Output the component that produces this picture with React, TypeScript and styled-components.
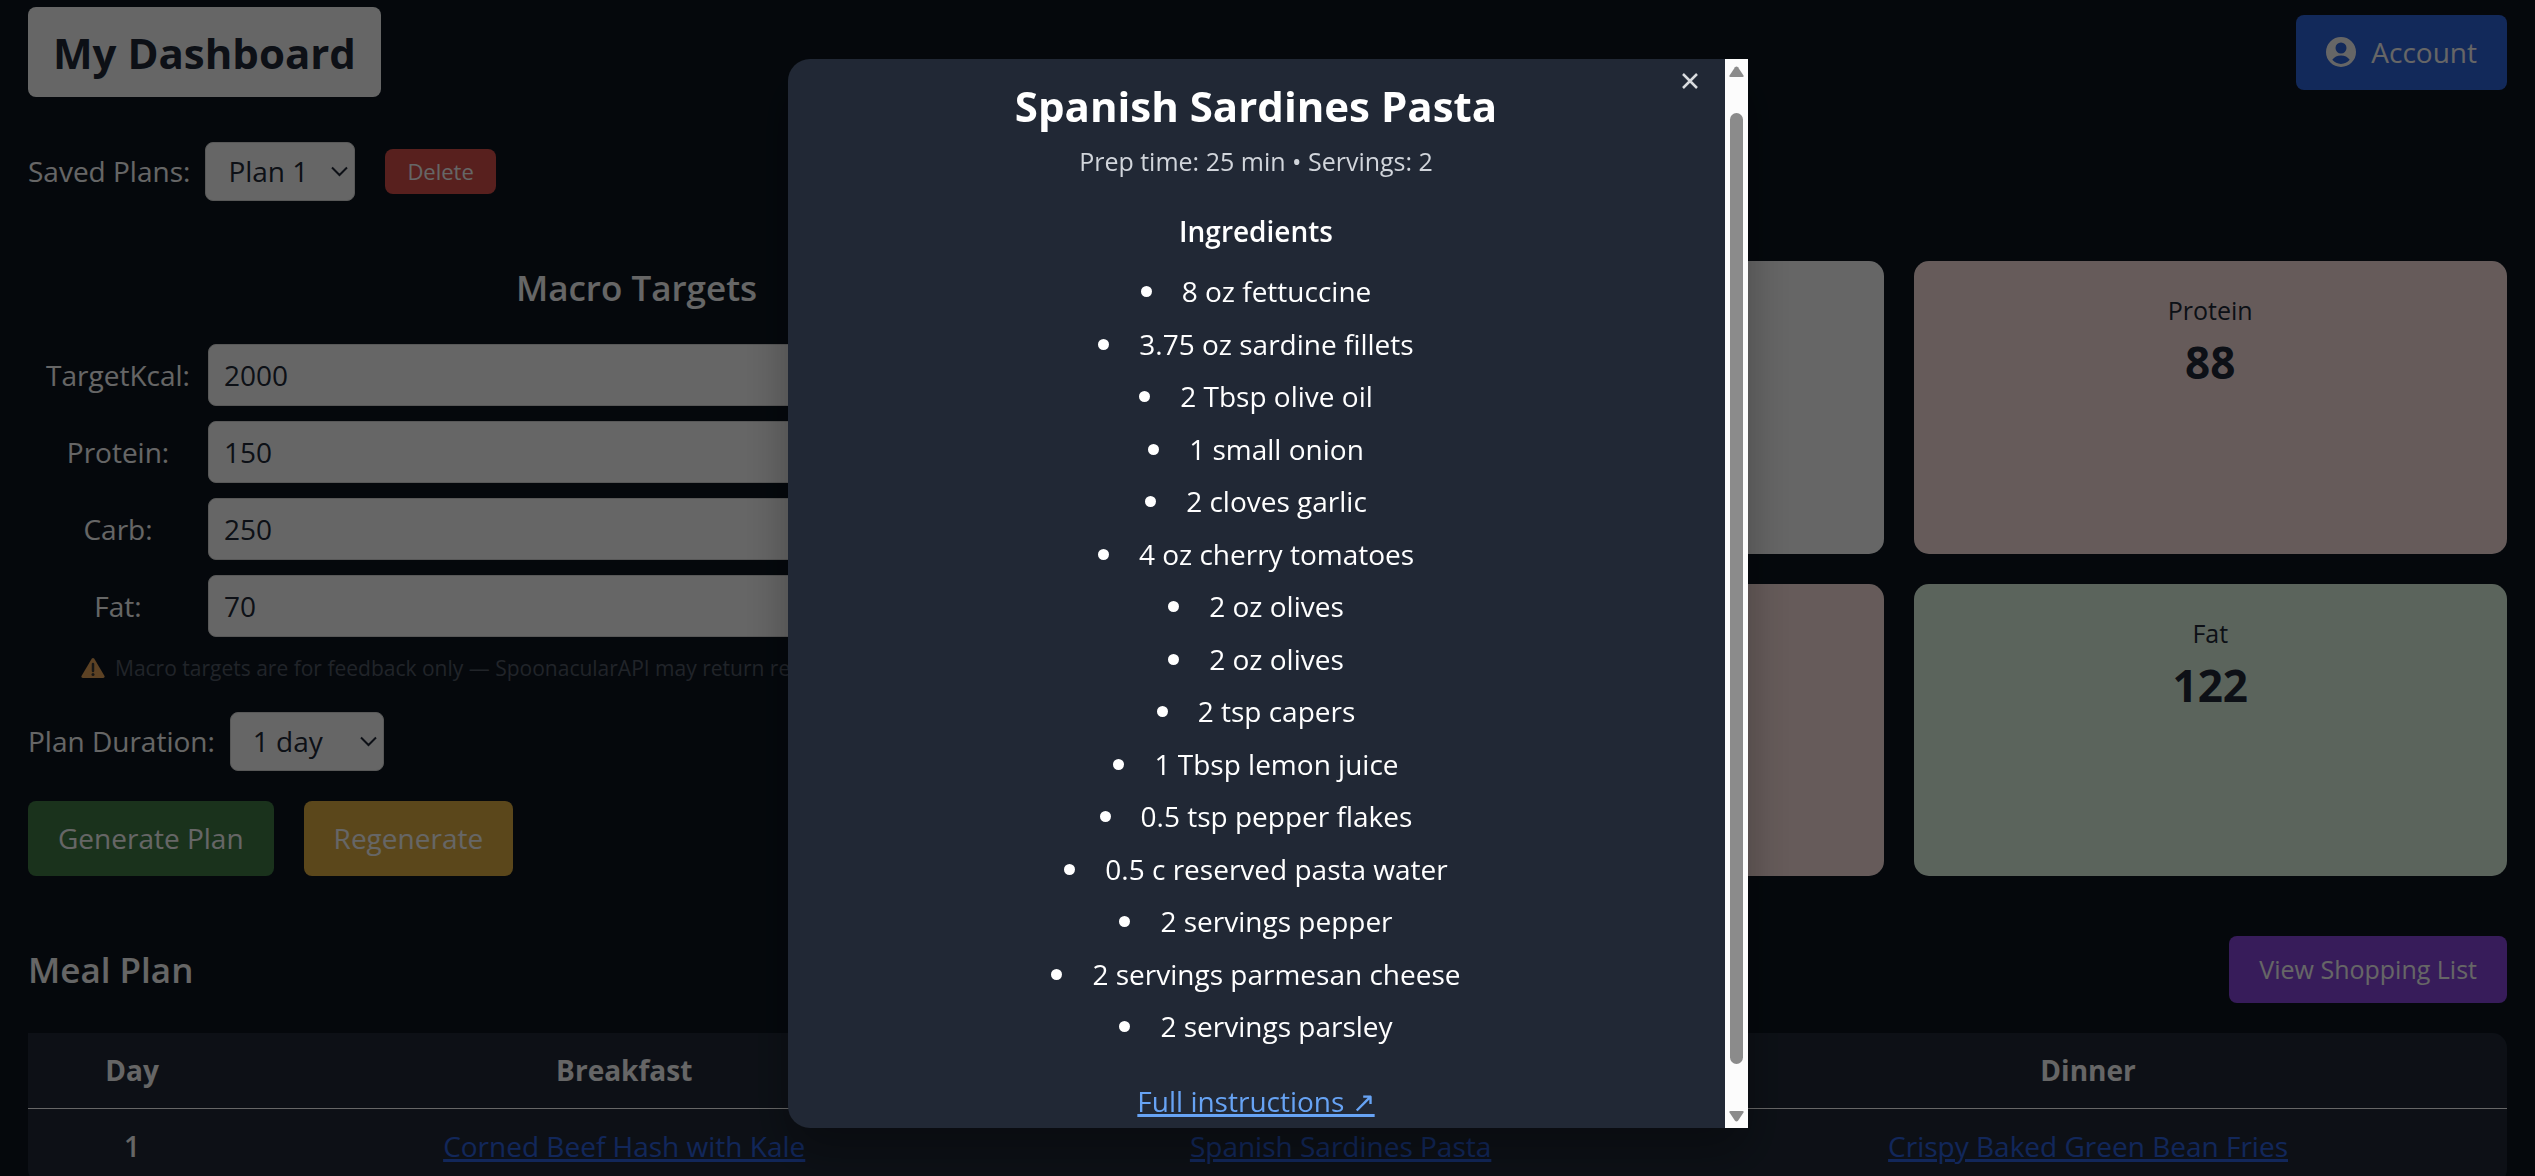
import React from "react";
import styled, { createGlobalStyle } from "styled-components";

const GlobalStyle = createGlobalStyle`
  *, *::before, *::after { box-sizing: border-box; }
  body {
    margin: 0;
    overflow: hidden;
    background: #0d1620;
    color: #ffffff;
    font-family: "Open Sans", "Noto Sans", sans-serif;
    font-size: 28px;
    line-height: 45px;
  }
  h1, h2, h3, p, ul { margin: 0; padding: 0; }
  button, input, select { font: inherit; }
`;

const Page = styled.main`
  padding: 7px 28px 30px;
`;

const Header = styled.header`
  display: flex;
  align-items: center;
  justify-content: space-between;
`;

const Brand = styled.h1`
  padding: 16px 25px 14px;
  border-radius: 8px;
  background: #ffffff;
  color: #212a38;
  font-size: 42px;
  line-height: 60px;
  font-weight: 700;
`;

type Tone = "blue" | "red" | "green" | "yellow" | "purple";
const tones: Record<Tone, string> = {
  blue: "#2f66e1",
  red: "#dc504b",
  green: "#417d46",
  yellow: "#e4b244",
  purple: "#8946e1",
};

type Size = "sm" | "md" | "lg";
const sizes: Record<Size, string> = {
  sm: "padding: 4px 22px; font-size: 22px; line-height: 37px;",
  md: "padding: 15px 30px; font-size: 25px; line-height: 37px;",
  lg: "padding: 15px 30px; font-size: 28px; line-height: 45px;",
};

const Button = styled.button<{ $tone: Tone; $size?: Size }>`
  display: inline-flex;
  align-items: center;
  gap: 15px;
  border: 0;
  border-radius: 8px;
  color: #ffffff;
  background: ${(p) => tones[p.$tone]};
  ${(p) => sizes[p.$size ?? "lg"]}
`;

const FieldRow = styled.div<{ $top?: number }>`
  display: flex;
  align-items: center;
  gap: 15px;
  margin-top: ${(p) => p.$top ?? 0}px;
`;

const Push = styled.div`
  margin-left: 15px;
  display: flex;
`;

const SelectBox = styled.span`
  display: grid;
  align-items: center;
  > * { grid-area: 1 / 1; }
  > svg {
    justify-self: end;
    margin-right: 7px;
    pointer-events: none;
  }
`;

const Select = styled.select<{ $width: number }>`
  appearance: none;
  width: ${(p) => p.$width}px;
  height: 59px;
  padding: 0 22px;
  border: 1px solid #dcdcdc;
  border-radius: 8px;
  background: #ffffff;
  color: #212a38;
`;

const Columns = styled.div`
  display: grid;
  grid-template-columns: 1fr 1fr;
  gap: 45px;
  margin-top: 60px;
`;

const Targets = styled.section`
  display: flex;
  flex-direction: column;
`;

const SectionTitle = styled.h2<{ $center?: boolean }>`
  font-size: 35px;
  line-height: 53px;
  font-weight: 600;
  text-align: ${(p) => (p.$center ? "center" : "left")};
`;

const MacroForm = styled.form`
  display: grid;
  gap: 15px;
  margin-top: 30px;
`;

const MacroField = styled.div`
  display: grid;
  grid-template-columns: 180px 1fr;
  align-items: center;
  text-align: center;
`;

const TextInput = styled.input`
  width: 100%;
  height: 62px;
  padding: 0 15px;
  border: 1px solid #dcdcdc;
  border-radius: 8px;
  background: #ffffff;
  color: #212a38;
`;

const Hint = styled.p`
  display: flex;
  align-items: center;
  gap: 10px;
  margin: 16px 0 29px;
  padding-left: 53px;
  color: #535b68;
  font-size: 21px;
  line-height: 30px;
  white-space: nowrap;
`;

const Actions = styled.div`
  display: flex;
  gap: 30px;
  margin-top: 30px;
`;

const Cards = styled.section`
  display: grid;
  grid-template-columns: 1fr 1fr;
  grid-auto-rows: 1fr;
  gap: 30px;
`;

const Card = styled.article<{ $bg: string }>`
  padding: 30px;
  border-radius: 15px;
  background: ${(p) => p.$bg};
  color: #212a38;
  text-align: center;
`;

const CardLabel = styled.p`
  font-size: 25px;
  line-height: 38px;
`;

const CardValue = styled.p`
  margin-top: 3px;
  font-size: 44px;
  line-height: 60px;
  font-weight: 700;
`;

const PlanHeader = styled.div`
  display: flex;
  align-items: center;
  justify-content: space-between;
  margin: 60px 0 30px;
`;

const PlanTable = styled.table`
  width: 100%;
  border-spacing: 0;
  table-layout: fixed;
  border-radius: 0 15px 15px 15px;
  overflow: hidden;
  background: #212a38;
  text-align: center;
`;

const HeadCell = styled.th<{ $share: number }>`
  width: ${(p) => p.$share}%;
  padding: 15px;
  border-bottom: 1px solid #ffffff;
  font-weight: 700;
`;

const Cell = styled.td<{ $strong?: boolean }>`
  padding: 15px;
  font-weight: ${(p) => (p.$strong ? 600 : 400)};
`;

const MealLink = styled.a`
  color: #2d62e1;
  text-decoration: underline;
  text-decoration-thickness: 3px;
  text-underline-offset: 2px;
`;

const Overlay = styled.div`
  position: fixed;
  inset: 0;
  display: flex;
  align-items: flex-start;
  justify-content: center;
  padding-top: 59px;
  background: rgba(0, 0, 0, 0.6);
`;

const Dialog = styled.div`
  position: relative;
  display: grid;
  grid-template-columns: 1fr 23px;
  width: 960px;
  border-radius: 22px 0 0 22px;
  background: #212835;
  box-shadow: 0 24px 48px rgba(0, 0, 0, 0.3);
`;

const DialogBody = styled.div`
  padding: 17px 45px 4px;
  text-align: center;
`;

const CloseButton = styled.button`
  position: absolute;
  top: 10px;
  right: 46px;
  display: flex;
  padding: 4px;
  border: 0;
  background: none;
  color: #d9dbde;
`;

const DialogTitle = styled.h2`
  font-size: 42px;
  line-height: 60px;
  font-weight: 700;
`;

const Meta = styled.p`
  margin-top: 6px;
  color: #d1d5db;
  font-size: 25px;
  line-height: 38px;
`;

const IngredientsTitle = styled.h3`
  margin-top: 29px;
  font-size: 28px;
  line-height: 45px;
  font-weight: 600;
`;

const Ingredients = styled.ul`
  margin: 11px 0 26px;
  list-style: none;
  line-height: 1.875;
`;

const Ingredient = styled.li`
  &::before {
    content: "";
    display: inline-block;
    width: 11px;
    height: 11px;
    margin-right: 30px;
    border-radius: 50%;
    background: #ffffff;
    vertical-align: 5px;
  }
`;

const Instructions = styled(MealLink)`
  color: #67a3f4;
`;

const ScrollTrack = styled.div`
  display: flex;
  flex-direction: column;
  align-items: center;
  padding: 7px 0 6px;
  background: #fcfcfc;
`;

const ScrollThumb = styled.div`
  flex: 1;
  width: 13px;
  margin: 36px 0 47px;
  border-radius: 7px;
  background: #8b8b8b;
`;

const Chevron = () => (
  <svg width="17" height="11" viewBox="0 0 17 11" fill="none" stroke="#212a38" strokeWidth="2">
    <path d="M1 1.500 8.500 9 16 1.500" />
  </svg>
);

const Arrow = ({ down }: { down?: boolean }) => (
  <svg width="15" height="11" viewBox="0 0 15 11" fill="#8b8b8b">
    <path
      d={
        down
          ? "M1.500 0h12q1.700 0 1 1.600L9 9.700q-1.500 1.600-3 0L.5 1.600Q-.2 0 1.500 0Z"
          : "M1.500 11h12q1.700 0 1-1.600L9 1.300q-1.500-1.600-3 0L.5 9.400Q-.2 11 1.500 11Z"
      }
    />
  </svg>
);

const AccountIcon = () => (
  <svg width="30" height="30" viewBox="0 0 30 30">
    <path
      fill="#fff"
      fillRule="evenodd"
      d="M15 0a15 15 0 1 0 0 30a15 15 0 0 0 0-30ZM15 5.500a5.500 5.500 0 1 1 0 11a5.500 5.500 0 0 1 0-11ZM15 27a12 12 0 0 1-8.700-4.200q3-4.300 8.700-4.300t8.700 4.300a12 12 0 0 1-8.700 4.200Z"
    />
  </svg>
);

const WarningIcon = () => (
  <svg width="24" height="20" viewBox="0 0 24 20">
    <path d="M10.700.8Q12-.6 13.300.8L23.500 18q.6 2-1.300 2H1.800Q-.1 20 .5 18Z" fill="#e8a55a" />
    <path d="M12 6v7" stroke="#3b3a39" strokeWidth="2.500" strokeLinecap="round" />
    <circle cx="12" cy="16.500" r="1.500" fill="#3b3a39" />
  </svg>
);

const targets = [
  { id: "kcal", label: "TargetKcal:", value: "2000" },
  { id: "protein", label: "Protein:", value: "150" },
  { id: "carb", label: "Carb:", value: "250" },
  { id: "fat", label: "Fat:", value: "70" },
];

const totals = [
  { label: "Calories", value: "2127", bg: "#ffffff" },
  { label: "Protein", value: "88", bg: "#ffe4e1" },
  { label: "Carbs", value: "176", bg: "#ffe4e1" },
  { label: "Fat", value: "122", bg: "#e4fae6" },
];

const ingredients = [
  "8 oz fettuccine",
  "3.75 oz sardine fillets",
  "2 Tbsp olive oil",
  "1 small onion",
  "2 cloves garlic",
  "4 oz cherry tomatoes",
  "2 oz olives",
  "2 oz olives",
  "2 tsp capers",
  "1 Tbsp lemon juice",
  "0.5 tsp pepper flakes",
  "0.5 c reserved pasta water",
  "2 servings pepper",
  "2 servings parmesan cheese",
  "2 servings parsley",
];

export default function App() {
  return (
    <>
      <GlobalStyle />
      <Page>
        <Header>
          <Brand>My Dashboard</Brand>
          <Button $tone="blue">
            <AccountIcon />
            Account
          </Button>
        </Header>

        <FieldRow $top={45}>
          <label htmlFor="saved">Saved Plans:</label>
          <SelectBox>
            <Select id="saved" $width={150} defaultValue="Plan 1">
              <option>Plan 1</option>
            </Select>
            <Chevron />
          </SelectBox>
          <Push>
            <Button $tone="red" $size="sm">Delete</Button>
          </Push>
        </FieldRow>

        <Columns>
          <Targets>
            <SectionTitle $center>Macro Targets</SectionTitle>
            <MacroForm>
              {targets.map((t) => (
                <MacroField key={t.id}>
                  <label htmlFor={t.id}>{t.label}</label>
                  <TextInput id={t.id} defaultValue={t.value} />
                </MacroField>
              ))}
            </MacroForm>
            <Hint>
              <WarningIcon />
              Macro targets are for feedback only — SpoonacularAPI may return results
            </Hint>
            <FieldRow>
              <label htmlFor="duration">Plan Duration:</label>
              <SelectBox>
                <Select id="duration" $width={154} defaultValue="1 day">
                  <option>1 day</option>
                </Select>
                <Chevron />
              </SelectBox>
            </FieldRow>
            <Actions>
              <Button $tone="green">Generate Plan</Button>
              <Button $tone="yellow">Regenerate</Button>
            </Actions>
          </Targets>
          <Cards>
            {totals.map((c) => (
              <Card key={c.label} $bg={c.bg}>
                <CardLabel>{c.label}</CardLabel>
                <CardValue>{c.value}</CardValue>
              </Card>
            ))}
          </Cards>
        </Columns>

        <PlanHeader>
          <SectionTitle>Meal Plan</SectionTitle>
          <Button $tone="purple" $size="md">View Shopping List</Button>
        </PlanHeader>

        <PlanTable>
          <thead>
            <tr>
              <HeadCell $share={8.4}>Day</HeadCell>
              <HeadCell $share={31.3}>Breakfast</HeadCell>
              <HeadCell $share={26.5}>Lunch</HeadCell>
              <HeadCell $share={33.8}>Dinner</HeadCell>
            </tr>
          </thead>
          <tbody>
            <tr>
              <Cell $strong>1</Cell>
              <Cell><MealLink href="#breakfast">Corned Beef Hash with Kale</MealLink></Cell>
              <Cell><MealLink href="#lunch">Spanish Sardines Pasta</MealLink></Cell>
              <Cell><MealLink href="#dinner">Crispy Baked Green Bean Fries</MealLink></Cell>
            </tr>
          </tbody>
        </PlanTable>
      </Page>

      <Overlay>
        <Dialog role="dialog" aria-modal="true" aria-labelledby="recipe-title">
          <DialogBody>
            <DialogTitle id="recipe-title">Spanish Sardines Pasta</DialogTitle>
            <Meta>Prep time: 25 min • Servings: 2</Meta>
            <IngredientsTitle>Ingredients</IngredientsTitle>
            <Ingredients>
              {ingredients.map((item, i) => (
                <Ingredient key={i}>{item}</Ingredient>
              ))}
            </Ingredients>
            <Instructions href="#instructions">Full instructions ↗</Instructions>
          </DialogBody>
          <ScrollTrack aria-hidden="true">
            <Arrow />
            <ScrollThumb />
            <Arrow down />
          </ScrollTrack>
          <CloseButton aria-label="Close">
            <svg width="16" height="16" viewBox="0 0 16 16" stroke="currentColor" strokeWidth="2.500">
              <path d="M1 1 15 15M15 1 1 15" />
            </svg>
          </CloseButton>
        </Dialog>
      </Overlay>
    </>
  );
}
